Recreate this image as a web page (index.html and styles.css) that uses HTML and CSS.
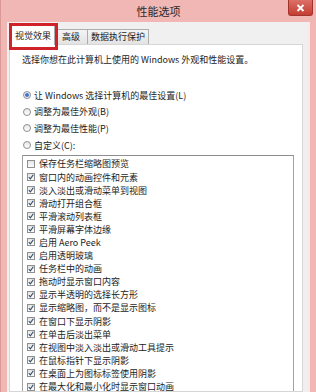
FILE: index.html
```html
<!DOCTYPE html>
<html lang="zh-CN">
<head>
    <meta charset="UTF-8">
    <title>性能选项</title>
    <link rel="stylesheet" href="styles.css">
</head>
<body>
<div class="window">
    <div class="titlebar">
        <span class="title">性能选项</span>
        <button class="close">
            <svg width="9" height="8" viewBox="0 0 9 8"><path d="M1.5 1 L7.5 7 M7.5 1 L1.5 7" stroke="#fff" stroke-width="1.8"/></svg>
        </button>
    </div>
    <div class="frame">
        <div class="client">
            <div class="tabs">
                <div class="tab active">视觉效果</div>
                <div class="tab">高级</div>
                <div class="tab">数据执行保护</div>
                <div class="mark"></div>
            </div>
            <div class="panel">
                <p class="intro">选择你想在此计算机上使用的 Windows 外观和性能设置。</p>
                <div class="options">
                    <label class="radio checked"><span class="ring"></span>让 Windows 选择计算机的最佳设置(L)</label>
                    <label class="radio"><span class="ring"></span>调整为最佳外观(B)</label>
                    <label class="radio"><span class="ring"></span>调整为最佳性能(P)</label>
                    <label class="radio"><span class="ring"></span>自定义(C):</label>
                </div>
                <ul class="list">
                    <li><span class="box"></span>保存任务栏缩略图预览</li>
                    <li class="on"><span class="box"></span>窗口内的动画控件和元素</li>
                    <li class="on"><span class="box"></span>淡入淡出或滑动菜单到视图</li>
                    <li class="on"><span class="box"></span>滑动打开组合框</li>
                    <li class="on"><span class="box"></span>平滑滚动列表框</li>
                    <li class="on"><span class="box"></span>平滑屏幕字体边缘</li>
                    <li class="on"><span class="box"></span>启用 Aero Peek</li>
                    <li class="on"><span class="box"></span>启用透明玻璃</li>
                    <li class="on"><span class="box"></span>任务栏中的动画</li>
                    <li class="on"><span class="box"></span>拖动时显示窗口内容</li>
                    <li class="on"><span class="box"></span>显示半透明的选择长方形</li>
                    <li class="on"><span class="box"></span>显示缩略图，而不是显示图标</li>
                    <li class="on"><span class="box"></span>在窗口下显示阴影</li>
                    <li class="on"><span class="box"></span>在单击后淡出菜单</li>
                    <li class="on"><span class="box"></span>在视图中淡入淡出或滑动工具提示</li>
                    <li class="on"><span class="box"></span>在鼠标指针下显示阴影</li>
                    <li class="on"><span class="box"></span>在桌面上为图标标签使用阴影</li>
                    <li class="on"><span class="box"></span>在最大化和最小化时显示窗口动画</li>
                </ul>
            </div>
        </div>
    </div>
</div>
</body>
</html>
```

FILE: styles.css
```css
body, html {
    margin: 0;
    padding: 0;
    width: 316px;
    height: 392px;
    overflow: hidden;
    font-family: "Noto Sans CJK SC", "Noto Sans", sans-serif;
    color: #1c1c1c;
}

.window {
    width: 316px;
    height: 392px;
    display: flex;
    flex-direction: column;
    background-color: #f1b7b4;
    border-left: 1px solid #d99a97;
    box-sizing: border-box;
}

.titlebar {
    height: 22px;
    display: grid;
    grid-template-columns: 1fr auto 1fr;
    align-items: start;
}

.title {
    grid-column: 2;
    font-size: 11px;
    line-height: 22px;
    color: #2a2a2a;
}

.close {
    grid-column: 3;
    justify-self: end;
    width: 25px;
    height: 16px;
    margin: 0 3px 0 0;
    padding: 0;
    display: flex;
    align-items: center;
    justify-content: center;
    background: linear-gradient(#dc7067, #c33d33);
    border: 1px solid #a2342c;
    border-top: none;
    border-radius: 0 0 3px 3px;
}

.frame {
    flex: 1;
    display: flex;
    padding: 0 6px 0 6px;
    min-height: 0;
}

.client {
    flex: 1;
    display: flex;
    flex-direction: column;
    background-color: #f0f0f0;
    padding: 3px 5px 0 2px;
    border-right: 2px solid #fbe9e8;
}

.tabs {
    position: relative;
    display: flex;
    align-items: flex-end;
    height: 19px;
    padding-left: 2px;
}

.tab {
    height: 14px;
    min-width: 26px;
    padding: 0 3px;
    font-size: 9px;
    line-height: 14px;
    text-align: center;
    border: 1px solid #adadad;
    border-bottom: none;
    background: linear-gradient(#f4f4f4, #e3e3e3);
    margin-left: -1px;
}

.tab.active {
    position: relative;
    z-index: 1;
    height: 19px;
    line-height: 19px;
    margin-bottom: -1px;
    margin-left: 0;
    background: #fff;
}

.mark {
    position: absolute;
    left: 0;
    top: -2px;
    width: 43px;
    height: 21px;
    border: 3px solid #cf2229;
    z-index: 2;
}

.panel {
    flex: 1;
    background: #fff;
    border: 1px solid #d6d6d6;
    padding: 9px 0 0 12px;
    min-height: 0;
    overflow: hidden;
}

.intro {
    margin: 0;
    font-size: 9px;
    line-height: 12px;
}

.options {
    margin-top: 21px;
    padding-left: 1px;
}

.radio {
    height: 16.6px;
    display: flex;
    align-items: center;
    gap: 3px;
    font-size: 9px;
}

.ring {
    width: 8px;
    height: 8px;
    box-sizing: border-box;
    border: 1px solid #8f8f8f;
    border-radius: 50%;
    background: linear-gradient(#e8e8e8, #fdfdfd);
}

.radio.checked .ring {
    background: radial-gradient(circle, #2f62be 0, #5a8ad8 1.6px, #e9eef6 2.4px);
}

.list {
    list-style: none;
    margin: 2px 8px 0 0;
    padding: 1px 0 0 4px;
    border: 1px solid #a3a3a3;
    border-top-color: #8e8e8e;
}

.list li {
    height: 13.1px;
    display: flex;
    align-items: center;
    gap: 4px;
    font-size: 9px;
    white-space: nowrap;
}

.box {
    width: 8px;
    height: 8px;
    box-sizing: border-box;
    border: 1px solid #8e8f8f;
    background: linear-gradient(#e6e6e6, #fbfbfb);
    flex: none;
}

.list li.on .box {
    background: url("data:image/svg+xml,%3Csvg xmlns='http://www.w3.org/2000/svg' width='6' height='6'%3E%3Cpath d='M0.8 3.2 L2.4 4.9 L5.3 0.8' fill='none' stroke='%23344a6a' stroke-width='1.1'/%3E%3C/svg%3E") center no-repeat, linear-gradient(#e6e6e6, #fbfbfb);
}
```
